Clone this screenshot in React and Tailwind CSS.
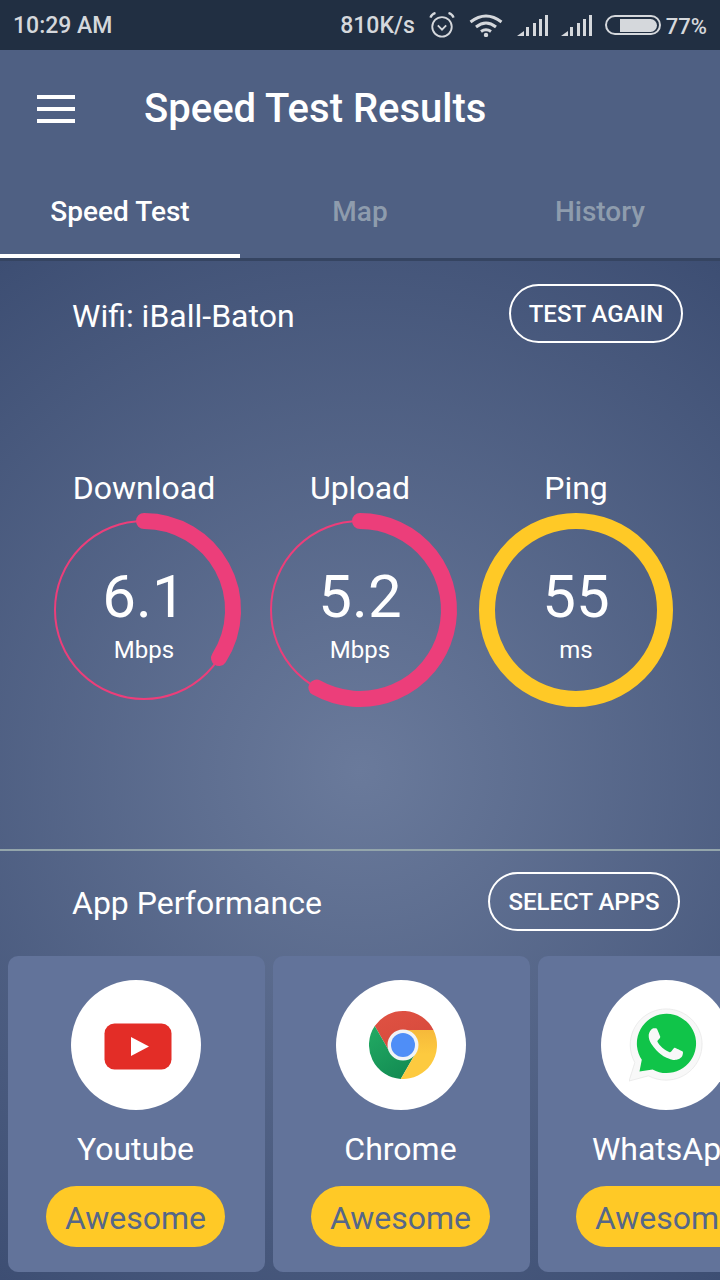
import React from 'react';

const Signal = () => (
  <svg width="32" height="21" viewBox="0 0 32 21" className="block">
    <path d="M0 21 L7 16 V21 Z" fill="#d5d8dc" />
    <rect x="9" y="12" width="3" height="9" fill="#d5d8dc" />
    <rect x="16" y="8" width="3" height="13" fill="#d5d8dc" />
    <rect x="22" y="4" width="3" height="17" fill="#d5d8dc" />
    <rect x="28" y="0" width="3" height="21" fill="#d5d8dc" />
  </svg>
);

const StatusBar = () => (
  <div className="h-[50px] bg-[#212f42] flex items-center pl-[13px] text-[23px] font-medium text-[#d5d8dc]">
    <span className="mt-[2px]">10:29 AM</span>
    <span className="ml-auto mt-[2px]">810K/s</span>
    <svg width="26" height="26" viewBox="0 0 28 28" fill="none" stroke="#d5d8dc" className="ml-[14px] block">
      <circle cx="14" cy="16" r="10.5" strokeWidth="2" />
      <path d="M9.5 14.5 L14 19 L18.5 14.5" strokeWidth="2" />
      <path d="M1.5 6 Q3 2 7 1" strokeWidth="2.4" />
      <path d="M26.5 6 Q25 2 21 1" strokeWidth="2.4" />
    </svg>
    <svg width="34" height="24" viewBox="0 0 34 24" fill="none" stroke="#d5d8dc" strokeWidth="3" className="ml-[14px] block">
      <path d="M1.5 9 Q17 -3 32.5 9" />
      <path d="M7 14 Q17 6 27 14" />
      <path d="M12 18.5 Q17 15 22 18.5" />
      <circle cx="17" cy="22" r="2.2" fill="#d5d8dc" stroke="none" />
    </svg>
    <div className="ml-[14px] mt-[1px]"><Signal /></div>
    <div className="ml-[12px] mt-[1px]"><Signal /></div>
    <div className="ml-[12px] w-[56px] h-[20px] rounded-full border-2 border-[#d5d8dc] flex items-center justify-end pr-[2px]">
      <div className="w-[37px] h-[13px] rounded-r-full bg-[#d5d8dc]" />
    </div>
    <span className="ml-[5px] mr-[13px] mt-[2px] text-[22px]">77%</span>
  </div>
);

const Header = () => (
  <div className="bg-[#4f6083] text-white">
    <div className="h-[120px] flex items-center pl-[37px]">
      <div className="w-[38px] flex flex-col gap-[8px] -mt-[2px]">
        <div className="h-[4px] bg-white" />
        <div className="h-[4px] bg-white" />
        <div className="h-[4px] bg-white" />
      </div>
      <h1 className="ml-[69px] text-[40px] font-medium -mt-[2px]">Speed Test Results</h1>
    </div>
    <div className="grid grid-cols-3 h-[88px] text-[28px] font-medium text-center">
      <div className="border-b-4 border-white pt-[21px]">Speed Test</div>
      <div className="pt-[21px] text-[#8e9cad]">Map</div>
      <div className="pt-[21px] text-[#8e9cad]">History</div>
    </div>
    <div className="h-[3px] bg-[#354461]" />
  </div>
);

const Gauge = ({ label, value, unit, arc, ring }) => (
  <div className="flex flex-col items-center">
    <div className="text-[32px] leading-[38px] text-white">{label}</div>
    <div className="relative w-[200px] h-[200px] mt-[3px]">
      <svg width="200" height="200" viewBox="0 0 200 200" fill="none" className="block">
        {ring ? (
          <circle cx="100" cy="100" r="89" stroke="#ffc926" strokeWidth="16" />
        ) : (
          <>
            <circle cx="100" cy="100" r="89" stroke="#ec3e7a" strokeWidth="2" />
            <path d={arc} stroke="#ec3e7a" strokeWidth="16" strokeLinecap="round" />
          </>
        )}
      </svg>
      <div className="absolute inset-0 flex flex-col items-center text-white">
        <div className="text-[60px] leading-[70px] mt-[52px]">{value}</div>
        <div className="text-[24px] leading-[28px] mt-[4px]">{unit}</div>
      </div>
    </div>
  </div>
);

const Youtube = () => (
  <svg width="68" height="47" viewBox="0 0 68 47" className="block ml-[3px] mt-[2px]">
    <rect x="0.5" y="0.5" width="67" height="46" rx="10" fill="#e32d27" />
    <path d="M27 14 L45 23.5 L27 33 Z" fill="#fff" />
  </svg>
);

const Chrome = () => (
  <svg width="68" height="68" viewBox="0 0 68 68" className="block ml-[4px]">
    <defs>
      <linearGradient id="red" x1="0" y1="0" x2="0.6" y2="1">
        <stop offset="0" stopColor="#e05243" />
        <stop offset="1" stopColor="#d64a3c" />
      </linearGradient>
      <linearGradient id="green" x1="0.2" y1="0" x2="0.8" y2="1">
        <stop offset="0" stopColor="#21a862" />
        <stop offset="1" stopColor="#128a52" />
      </linearGradient>
      <linearGradient id="yellow" x1="0.5" y1="0" x2="0.5" y2="0.5">
        <stop offset="0" stopColor="#f6b93a" />
        <stop offset="1" stopColor="#fdca3f" />
      </linearGradient>
    </defs>
    <path d="M5.74 15.09 A34 34 0 0 1 64.5 19 L34 19 L34 34 L21 41.5 Z" fill="url(#red)" />
    <path d="M31.75 67.93 A34 34 0 0 1 5.74 15.09 L21 41.5 L34 34 L47 41.5 Z" fill="url(#green)" />
    <path d="M64.5 19 A34 34 0 0 1 31.75 67.93 L47 41.5 L34 34 L34 19 Z" fill="url(#yellow)" />
    <circle cx="34" cy="34" r="15.5" fill="#f1f3f6" />
    <circle cx="34" cy="34" r="12" fill="#4f8ef7" />
  </svg>
);

const Whatsapp = () => (
  <svg width="74" height="74" viewBox="0 0 24 24" className="block">
    <path d="M12.05 0.3C5.6 0.3 0.4 5.5 0.4 12c0 2 .5 3.9 1.5 5.7L0 23.7l6.3-1.7c1.7.9 3.7 1.4 5.7 1.4 6.5 0 11.7-5.2 11.7-11.7C23.7 5.5 18.5.3 12.05.3z" fill="#f8f8f8" stroke="#e2e2e2" strokeWidth="0.2" />
    <path d="M4.15 16.8 L3.4 20.6 L7.64 19.97 A9.6 9.6 0 1 0 4.15 16.8 Z" fill="#10c449" />
    <path transform="translate(12 11.7) scale(0.92) translate(-12.1 -12)" d="M17.472 14.382c-.297-.149-1.758-.867-2.03-.967-.273-.099-.471-.148-.67.15-.197.297-.767.966-.94 1.164-.173.199-.347.223-.644.075-.297-.15-1.255-.463-2.39-1.475-.883-.788-1.48-1.761-1.653-2.059-.173-.297-.018-.458.13-.606.134-.133.298-.347.446-.52.149-.174.198-.298.298-.497.099-.198.05-.371-.025-.52-.075-.149-.669-1.612-.916-2.207-.242-.579-.487-.5-.669-.51-.173-.008-.371-.01-.57-.01-.198 0-.52.074-.792.372-.272.297-1.04 1.016-1.04 2.479 0 1.462 1.065 2.875 1.213 3.074.149.198 2.096 3.2 5.077 4.487.709.306 1.262.489 1.694.625.712.227 1.36.195 1.871.118.571-.085 1.758-.719 2.006-1.413.248-.694.248-1.289.173-1.413-.074-.124-.272-.198-.57-.347z" fill="#f8f8f8" />
  </svg>
);

const AppCard = ({ name, children }) => (
  <div className="w-[257px] h-[316px] shrink-0 rounded-[10px] bg-[#62739a] flex flex-col items-center pt-[24px] pr-[1px]">
    <div className="w-[130px] h-[130px] rounded-full bg-white flex items-center justify-center">{children}</div>
    <div className="mt-[20px] -ml-[1px] text-[32px] leading-[38px] text-white whitespace-nowrap">{name}</div>
    <div className="mt-[18px] -ml-[1px] w-[179px] h-[61px] shrink-0 rounded-full bg-[#ffc926] flex items-center justify-center pt-[2px] text-[32px] text-[#566789]">
      Awesome
    </div>
  </div>
);

export default function App() {
  return (
    <div className="w-[720px] h-[1280px] overflow-hidden font-[Roboto,sans-serif] bg-[#4f6083]">
      <StatusBar />
      <Header />
      <div className="h-[1019px] bg-[radial-gradient(circle_at_50%_50%,#6a7a9b_0%,#3d4e73_100%)]">
        <div className="flex items-center justify-between pt-[23px] pl-[72px] pr-[37px]">
          <div className="text-[32px] text-white mt-[4px]">Wifi: iBall-Baton</div>
          <div className="w-[174px] h-[59px] rounded-full border-2 border-white flex items-center justify-center text-[24px] font-medium text-white">
            TEST AGAIN
          </div>
        </div>
        <div className="grid grid-cols-3 px-[36px] mt-[126px] justify-items-center">
          <Gauge label="Download" value="6.1" unit="Mbps" arc="M100 11 A89 89 0 0 1 175 148" />
          <Gauge label="Upload" value="5.2" unit="Mbps" arc="M100 11 A89 89 0 1 1 56.4 177.6" />
          <Gauge label="Ping" value="55" unit="ms" ring />
        </div>
        <div className="mt-[139px] h-[2px] bg-[#93a5ab]" />
        <div className="flex items-center justify-between pt-[21px] pl-[72px] pr-[40px]">
          <div className="text-[32px] text-white mt-[3px]">App Performance</div>
          <div className="w-[192px] h-[59px] rounded-full border-2 border-white flex items-center justify-center text-[24px] font-medium text-white">
            SELECT APPS
          </div>
        </div>
        <div className="flex gap-[8px] pl-[8px] mt-[25px]">
          <AppCard name="Youtube"><Youtube /></AppCard>
          <AppCard name="Chrome"><Chrome /></AppCard>
          <AppCard name="WhatsApp"><Whatsapp /></AppCard>
        </div>
      </div>
    </div>
  );
}
